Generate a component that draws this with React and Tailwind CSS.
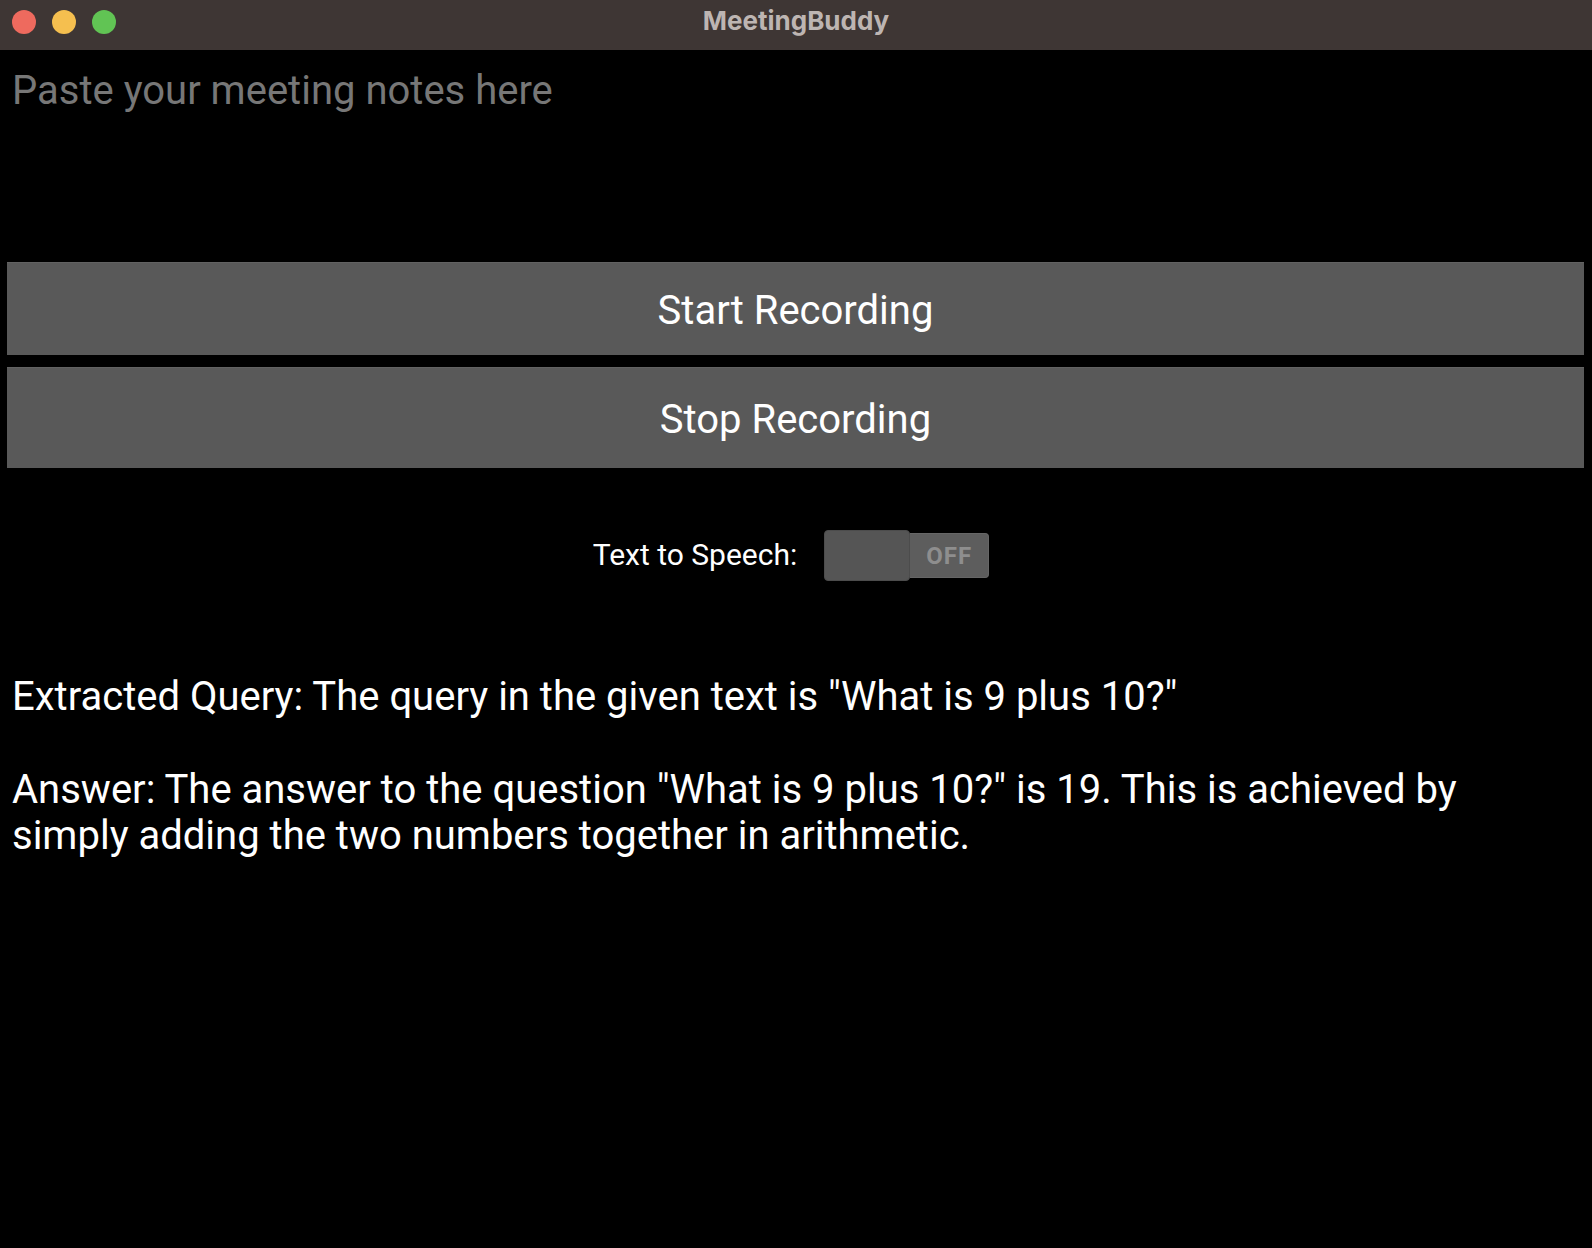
import React from "react";

export default function App() {
  return (
    <div className="w-[1592px] h-[1248px] flex flex-col bg-black overflow-hidden" style={{ fontFamily: "Roboto, 'Noto Sans', sans-serif" }}>
      {/* Title bar */}
      <div className="h-[50px] shrink-0 bg-[#3e3634] grid grid-cols-[1fr_auto_1fr] items-center pb-[6px]">
        <div className="flex items-center gap-[16px] pl-[12px]">
          <span className="w-[24px] h-[24px] rounded-full bg-[#ee6a5e]" />
          <span className="w-[24px] h-[24px] rounded-full bg-[#f5bf4f]" />
          <span className="w-[24px] h-[24px] rounded-full bg-[#61c454]" />
        </div>
        <div className="text-[26px] leading-none font-bold text-[#bdb5b2] mb-[2px]" style={{ fontFamily: "Inter, 'Liberation Sans', sans-serif" }}>
          MeetingBuddy
        </div>
        <div />
      </div>

      {/* Body */}
      <div className="flex-1 flex flex-col bg-black">
        <textarea
          className="h-[206px] w-full resize-none bg-black pt-[17px] pl-[12px] text-[40px] leading-[47px] text-white placeholder:text-[#777777] outline-none"
          placeholder="Paste your meeting notes here"
          style={{ fontFamily: "Roboto, sans-serif" }}
        />

        <div className="mt-[6px] pl-[7px] pr-[8px] flex flex-col gap-[12px]">
          <button className="h-[93px] w-full bg-[#595959] border-t border-[#626262] text-white text-[40px] leading-none flex items-center justify-center pt-[4px]">
            Start Recording
          </button>
          <button className="h-[101px] w-full bg-[#595959] border-t border-[#626262] text-white text-[40px] leading-none flex items-center justify-center pt-[4px]">
            Stop Recording
          </button>
        </div>

        {/* Switch row */}
        <div className="mt-[62px] flex items-center justify-center pr-[10px]">
          <span className="text-[30px] text-white leading-none mt-[-1px]">Text to Speech:</span>
          <div className="ml-[27px] flex items-center">
            <div className="w-[86px] h-[51px] rounded-[4px] bg-[#555555] border border-[#4c4c4c]" />
            <div className="w-[79px] h-[45px] rounded-r-[4px] bg-[#5d5d5d] border border-[#666666] border-l-0 flex items-center justify-center">
              <span className="text-[24px] font-bold text-[#8e8e8e] tracking-[1px] leading-none">OFF</span>
            </div>
          </div>
        </div>

        {/* Output text */}
        <div className="mt-[93px] pl-[12px] max-w-[1530px] text-white text-[40px] leading-[46px]">
          <div>Extracted Query: The query in the given text is "What is 9 plus 10?"</div>
          <div className="mt-[47px]">
            Answer: The answer to the question "What is 9 plus 10?" is 19. This is achieved by simply adding the two numbers together in arithmetic.
          </div>
        </div>
      </div>
    </div>
  );
}
